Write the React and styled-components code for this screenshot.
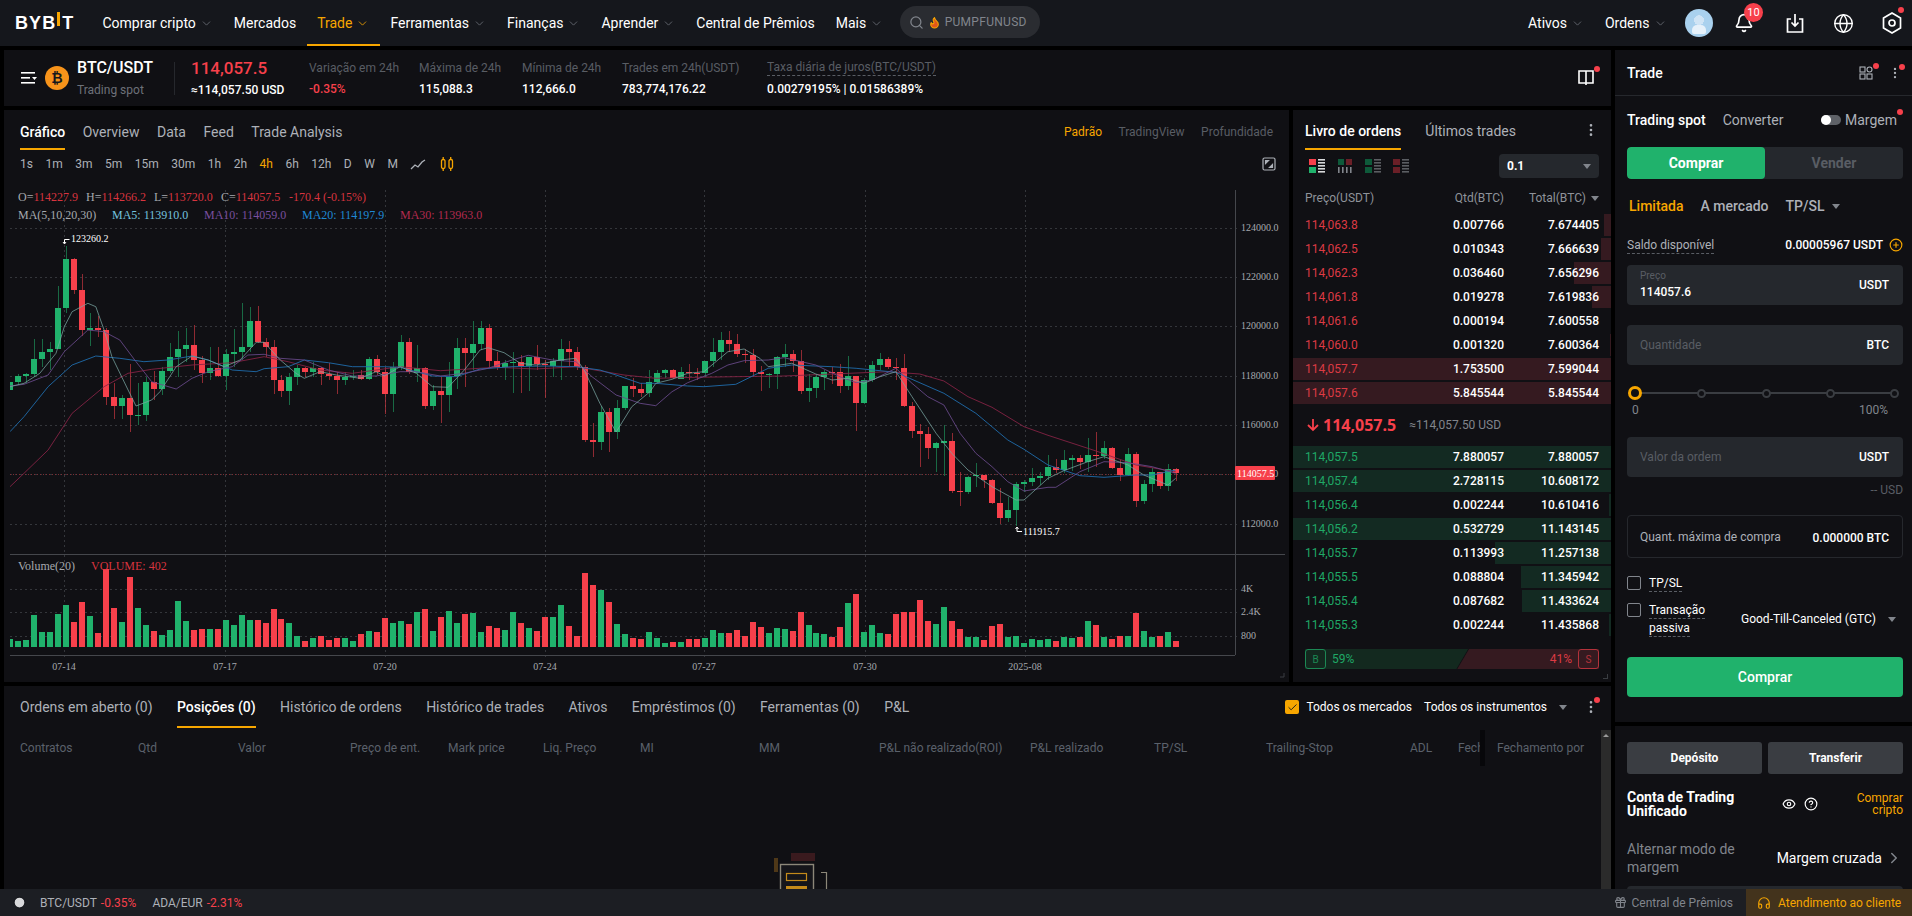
import React from 'react';
import styled, { createGlobalStyle } from 'styled-components';
import { ChevronDown, ChevronRight, Search, Bell, Globe, Eye, CircleHelp, Headphones, Gift, CirclePlus, Flame, EllipsisVertical, Check, Clock } from 'lucide-react';

const RED = '#f7404b', GREEN = '#20b26c', ORANGE = '#f7a600', PANEL = '#101014', FIELD = '#25282d';

const Global = createGlobalStyle`
  html, body { margin: 0; padding: 0; background: #000; }
  * { box-sizing: border-box; }
  #root { width: 1912px; height: 916px; overflow: hidden; font-family: Roboto, "Noto Sans", sans-serif; color: #fff; font-size: 12px; }
`;

const Page = styled.div`width: 1912px; height: 916px; display: flex; flex-direction: column; background: #000; overflow: hidden;`;

/* ---------- header ---------- */
const Header = styled.header`height: 46px; flex: none; background: #15171c; display: flex; align-items: stretch; padding: 0 6px 0 15px;`;
const Logo = styled.div`display: flex; align-items: flex-end; height: 32px; font: 700 18px "Liberation Sans", sans-serif; letter-spacing: 1.1px; line-height: 18px; color: #fff; width: 66px; margin-right: 11px;`;
const LogoBar = styled.i`display: inline-block; width: 3px; height: 14px; background: ${ORANGE}; margin: 0 2px 6px 1px;`;
const Nav = styled.nav`display: flex; align-items: stretch;`;
const NavItem = styled.a`position: relative; display: flex; align-items: center; gap: 4px; padding: 0 10.5px; font-size: 14px; color: ${p => p.$active ? ORANGE : '#fff'}; white-space: nowrap;
  ${p => p.$active ? `&::after { content: ''; position: absolute; left: 0; right: 0; bottom: 0; height: 2px; background: ${ORANGE}; }` : ''}
`;
const SearchPill = styled.div`width: 140px; height: 32px; margin: 6px 0 0 6px; border-radius: 16px; background: #2a2c31; display: flex; align-items: center; padding-left: 9px; gap: 4px; color: #81858c; font-size: 12px; letter-spacing: .3px;`;
const HeaderRight = styled.div`margin-left: auto; display: flex; align-items: center;`;
const IconBtn = styled.div`position: relative; width: 28px; display: flex; justify-content: center; color: #fff; margin-left: ${p => p.$ml}px;`;
const Avatar = styled.div`width: 28px; height: 28px; border-radius: 50%; background: radial-gradient(circle at 50% 40%, #cfe4f5 0 22%, #a9d1ee 23% 100%); position: relative; overflow: hidden; margin-left: 8px;
  &::after { content: ''; position: absolute; left: 7px; bottom: 3px; width: 14px; height: 9px; border-radius: 5px 5px 2px 2px; background: #e6f1fa; }`;
const Badge = styled.span`position: absolute; top: -10px; left: 14px; min-width: 19px; height: 19px; border-radius: 50%; background: ${RED}; font-size: 11px; display: flex; align-items: center; justify-content: center; color: #fff;`;
const Dot = styled.span`position: absolute; width: 6px; height: 6px; border-radius: 50%; background: ${RED}; top: ${p => p.$t}px; right: ${p => p.$r}px;`;

/* ---------- layout ---------- */
const Main = styled.div`flex: 1; min-height: 0; display: flex; gap: 4px; padding: 4px 0 0 4px; overflow: hidden;`;
const LeftCol = styled.div`width: 1607px; flex: none; display: flex; flex-direction: column; gap: 4px;`;
const RightCol = styled.div`width: 297px; flex: none; display: flex; flex-direction: column; gap: 4px;`;
const Panel = styled.section`background: ${PANEL}; position: relative;`;

/* ---------- ticker ---------- */
const Ticker = styled(Panel)`height: 56px; flex: none; display: flex; align-items: center; padding-left: 17px;`;
const CoinWrap = styled.div`display: flex; align-items: center; gap: 8px; margin-left: 8px; width: 129px;`;
const Coin = styled.div`width: 24px; height: 24px; border-radius: 50%; background: #f7931a; flex: none; display: flex; align-items: center; justify-content: center; font: 700 14px "Liberation Sans", sans-serif; color: #15171c;`;
const PairName = styled.div`font-size: 16px; font-weight: 500; line-height: 20px;`;
const PairSub = styled.div`font-size: 12px; color: #6d7179; line-height: 18px; margin-top: 3px;`;
const VLine = styled.div`width: 1px; height: 33px; background: #26282d; margin: 0 16px 0 0;`;
const PriceBox = styled.div`width: 118px;`;
const PriceBig = styled.div`font-size: 17px; font-weight: 500; color: ${RED}; line-height: 22px;`;
const PriceSub = styled.div`font-size: 12px; font-weight: 500; line-height: 18px; margin-top: 2px;`;
const Stat = styled.div`width: ${p => p.$w}px; flex: none;`;
const StatLabel = styled.div`font-size: 12px; color: #595d64; line-height: 16px; white-space: nowrap; ${p => p.$dash ? 'border-bottom: 1px dashed #595d64; display: inline-block;' : ''}`;
const StatValue = styled.div`font-size: 12px; font-weight: 500; color: ${p => p.$c || '#fff'}; line-height: 16px; margin-top: 5px; white-space: nowrap;`;
const TickerEnd = styled.div`position: absolute; right: 13px; top: 18px; width: 24px; height: 20px; color: #fff; display: flex; justify-content: center;`;

/* ---------- chart panel ---------- */
const MiddleRow = styled.div`height: 572px; flex: none; display: flex; gap: 4px;`;
const ChartPanel = styled(Panel)`width: 1285px; flex: none; overflow: hidden;`;
const ChartTop = styled.div`height: 40px; display: flex; align-items: stretch; padding: 0 16px 0 16px; gap: 17.5px;`;
const ChartTab = styled.div`position: relative; display: flex; align-items: center; padding-top: ${p => p.$pt || 4}px; font-size: 14px; color: ${p => p.$active ? '#fff' : '#adb1b8'}; font-weight: ${p => p.$active ? 500 : 400};
  ${p => p.$active ? `&::after { content: ''; position: absolute; left: 0; right: 0; bottom: 0; height: 2px; background: ${ORANGE}; }` : ''}`;
const ViewSwitch = styled.div`margin-left: auto; padding-top: 4px; display: flex; align-items: center; gap: 16.5px;`;
const ViewItem = styled.span`font-size: 12px; color: ${p => p.$active ? ORANGE : '#595d64'};`;
const TimeRow = styled.div`height: 28px; display: flex; align-items: center; padding: 0 13px 0 16px;`;
const TimeItem = styled.span`font-size: 12px; color: ${p => p.$active ? ORANGE : '#adb1b8'}; margin-right: 12.5px;`;
const Expand = styled.div`margin-left: auto; color: #adb1b8; display: flex;`;
const ChartSvg = styled.svg`display: block; text { font-family: "Liberation Serif", serif; }`;

/* ---------- order book ---------- */
const Book = styled(Panel)`width: 318px; flex: none; overflow: hidden;`;
const BookTabs = styled.div`height: 40px; display: flex; align-items: stretch; padding: 0 12px; gap: 24px; position: relative;`;
const BookDots = styled.div`position: absolute; right: 12px; top: 12px; color: #adb1b8; display: flex;`;
const BookTools = styled.div`height: 32px; display: flex; align-items: center; padding: 0 12px 0 16px; gap: 12px;`;
const Select = styled.div`margin-left: auto; width: 100px; height: 24px; border-radius: 4px; background: ${FIELD}; display: flex; align-items: center; justify-content: space-between; padding: 0 8px; font-size: 12px; font-weight: 700;`;
const Caret = styled.i`display: inline-block; width: 0; height: 0; border-left: ${p => p.$s || 4}px solid transparent; border-right: ${p => p.$s || 4}px solid transparent; border-top: ${p => (p.$s || 4) + 1}px solid ${p => p.$c || '#81858c'};`;
const BookHead = styled.div`height: 32px; display: grid; grid-template-columns: 128px 71px 95px; align-items: center; padding: 0 0 0 12px; color: #8f939a; font-size: 12px;`;
const Right = styled.div`text-align: right; white-space: nowrap; display: flex; justify-content: flex-end; align-items: center; gap: 5px;`;
const Rows = styled.div`display: flex; flex-direction: column; gap: 2px;`;
const Row = styled.div`position: relative; height: 22px; display: grid; grid-template-columns: 128px 71px 95px; align-items: center; padding-left: 12px; font-size: 12px; font-weight: 500;`;
const RowBar = styled.span`position: absolute; right: 0; top: 0; bottom: 0; background: ${p => p.$c};`;
const RowPrice = styled.span`position: relative; color: ${p => p.$c}; font-weight: 400;`;
const RowNum = styled.span`position: relative; text-align: right;`;
const Mid = styled.div`height: 42px; display: flex; align-items: center; padding-left: 13px; gap: 3px;`;
const MidPrice = styled.span`font: 700 16px "Noto Sans", sans-serif; color: ${RED}; margin-right: 10px;`;
const MidSub = styled.span`font-size: 12px; color: #81858c;`;
const Ratio = styled.div`position: relative; margin: 13px 12px 0; height: 20px; display: flex; justify-content: space-between; align-items: center; font-size: 12px;`;
const RatioFill = styled.div`position: absolute; inset: 0; background: ${p => p.$bg}; clip-path: ${p => p.$clip};`;
const RatioSide = styled.div`position: relative; display: flex; align-items: center; gap: 6px; color: ${p => p.$c};`;
const RatioBox = styled.span`width: 21px; height: 20px; border: 1px solid ${p => p.$c}; border-radius: 3px; display: flex; align-items: center; justify-content: center; font-size: 10px; opacity: .75;`;
const Corner = styled.i`position: absolute; right: 3px; bottom: 3px; width: 5px; height: 5px; border-right: 1px solid #3a3d42; border-bottom: 1px solid #3a3d42;`;

/* ---------- bottom panel ---------- */
const Bottom = styled(Panel)`flex: 1; min-height: 0; display: flex; flex-direction: column; overflow: hidden;`;
const BottomTabs = styled.div`height: 42px; flex: none; display: flex; align-items: stretch; padding: 0 12px 0 16px; gap: 24.4px; margin-bottom: 2px;`;
const BottomTab = styled.div`position: relative; display: flex; align-items: center; font-size: 14px; color: ${p => p.$active ? '#fff' : '#adb1b8'}; font-weight: ${p => p.$active ? 500 : 400}; white-space: nowrap;
  ${p => p.$active ? `&::after { content: ''; position: absolute; left: 0; right: 0; bottom: 0; height: 2px; background: ${ORANGE}; }` : ''}`;
const BottomTools = styled.div`margin-left: auto; display: flex; align-items: center; font-size: 12px; position: relative;`;
const OrangeCheck = styled.div`width: 14px; height: 14px; background: ${ORANGE}; border-radius: 2px; display: flex; align-items: center; justify-content: center; color: #15171c; margin-right: 7px;`;
const ToolLabel = styled.span`margin: 0 12px;`;
const ToolDots = styled.span`display: flex; margin-left: 16px; color: #adb1b8;`;
const BottomBody = styled.div`flex: 1; min-height: 0; display: flex;`;
const TableWrap = styled.div`flex: 1; min-width: 0; overflow: hidden;`;
const TableHead = styled.div`height: 36px; display: grid; grid-template-columns: 118px 100px 112px 98px 95px 97px 119px 120px 151px 124px 112px 144px 48px 22px 1fr; align-items: center; padding-left: 16px; font-size: 12px; color: #5b616b; white-space: nowrap;`;
const ClipCell = styled.span`overflow: hidden;`;
const LastCell = styled.span`position: relative; padding-left: 17px;
  &::before { content: ''; position: absolute; left: 0; top: -11px; bottom: -11px; width: 5px; background: #07070a; }`;
const EmptyArt = styled.svg`display: block; margin: 87px 0 0 770px;`;
const Scroll = styled.div`width: 10px; flex: none; background: #2b2b2b; position: relative;
  &::after { content: ''; position: absolute; left: 2px; top: 4px; border-left: 3px solid transparent; border-right: 3px solid transparent; border-bottom: 3px solid #9a9a9a; }`;

/* ---------- trade panel ---------- */
const TradePanel = styled(Panel)`height: 672px; flex: none; padding: 0 9px 0 12px;`;
const TradeHead = styled.div`height: 46px; margin: 0 -9px 0 -12px; padding: 0 9px 0 12px; border-bottom: 1px solid #26282d; display: flex; align-items: center; justify-content: space-between; font-size: 14px; font-weight: 500;`;
const HeadIcons = styled.div`display: flex; align-items: center; gap: 15px; position: relative; color: #adb1b8; padding-right: 1px;`;
const ModeRow = styled.div`height: 24px; margin-top: 12px; display: flex; align-items: center; font-size: 14px; font-weight: 500; position: relative;`;
const ModeOff = styled.span`color: #adb1b8; font-weight: 400; margin-left: ${p => p.$ml}px; margin-right: ${p => p.$mr || 0}px;`;
const Toggle = styled.span`margin-left: auto; width: 20px; height: 10px; border-radius: 5px; background: #5e6167; position: relative; margin-right: 4px;
  &::after { content: ''; position: absolute; left: 0; top: 0; width: 10px; height: 10px; border-radius: 50%; background: #fff; }`;
const SideSwitch = styled.div`margin-top: 15px; height: 32px; display: flex; background: ${FIELD}; border-radius: 4px; overflow: hidden; font-size: 14px; font-weight: 700;`;
const SideBtn = styled.div`width: 138px; display: flex; align-items: center; justify-content: center; color: ${p => p.$on ? '#fff' : '#595d64'}; background: ${p => p.$on ? GREEN : 'transparent'}; border-radius: 4px;`;
const OrderTypes = styled.div`margin-top: 16px; height: 22px; padding-left: 2px; display: flex; align-items: center; gap: 17px; font-size: 14px; font-weight: 500;`;
const OrderType = styled.span`color: ${p => p.$on ? ORANGE : '#adb1b8'}; display: flex; align-items: center; gap: 8px;`;
const SaldoRow = styled.div`margin-top: 19px; height: 18px; display: flex; align-items: center; justify-content: space-between; font-size: 12px;`;
const DashLabel = styled.span`color: ${p => p.$c || '#adb1b8'}; border-bottom: 1px dashed #595d64; line-height: 16px;`;
const SaldoValue = styled.span`display: flex; align-items: center; gap: 6px; font-weight: 500; color: #fff;`;
const Field = styled.div`position: relative; height: 40px; margin-top: ${p => p.$mt}px; background: ${FIELD}; border-radius: 4px; display: flex; align-items: center; justify-content: space-between; padding: 0 14px 0 13px; font-size: 12px; color: #595d64;`;
const FieldStack = styled.div`display: flex; flex-direction: column;`;
const FieldMini = styled.span`font-size: 10px; color: #595d64; line-height: 13px;`;
const FieldValue = styled.span`font-size: 12px; color: #fff; font-weight: 500; line-height: 17px; margin-top: 2px;`;
const FieldUnit = styled.span`color: #fff; font-weight: 500;`;
const SliderWrap = styled.div`margin-top: 20px; height: 16px; display: flex; align-items: center; justify-content: space-between; position: relative; padding: 0 4px 0 1px;
  &::before { content: ''; position: absolute; left: 8px; right: 6px; top: 7px; height: 2px; background: #3a3d42; }`;
const Thumb = styled.span`position: relative; width: 14px; height: 14px; border-radius: 50%; border: 3px solid ${ORANGE}; background: ${PANEL};`;
const Node = styled.span`position: relative; width: 9px; height: 9px; border-radius: 50%; border: 2px solid #3a3d42; background: ${PANEL};`;
const SliderLabels = styled.div`margin-top: 1px; display: flex; justify-content: space-between; padding: 0 15px 0 5px; color: #81858c; font-size: 12px; line-height: 16px;`;
const USD = styled.div`text-align: right; color: #595d64; font-size: 12px; line-height: 16px; margin-top: 5px;`;
const MaxBox = styled.div`height: 43px; margin-top: 17px; border: 1px solid #26282d; border-radius: 4px; display: flex; align-items: center; justify-content: space-between; padding: 0 13px 0 12px; font-size: 12px; color: #adb1b8;`;
const MaxVal = styled.span`color: #fff; font-weight: 500; margin-top: 3px;`;
const CheckRow = styled.div`display: flex; gap: 8px; margin-top: ${p => p.$mt}px; align-items: flex-start;`;
const CheckBox = styled.span`width: 14px; height: 14px; border: 1px solid #81858c; border-radius: 2px; flex: none;`;
const CheckLabels = styled.div`display: flex; flex-direction: column; gap: 1px; width: 84px; line-height: 16px; font-size: 12px; margin-top: -1px; align-items: flex-start;`;
const Gtc = styled.div`display: flex; align-items: center; gap: 12px; font-size: 12px; margin-top: 9px; white-space: nowrap;`;
const BigBuy = styled.div`height: 40px; margin-top: 20px; background: ${GREEN}; border-radius: 4px; display: flex; align-items: center; justify-content: center; font-size: 14px; font-weight: 500;`;

const Account = styled(Panel)`flex: 1; min-height: 0; padding: 16px 9px 0 12px; overflow: hidden;`;
const BtnRow = styled.div`display: flex; gap: 6px;`;
const GrayBtn = styled.div`flex: 1; height: 32px; background: #3a3d42; border-radius: 3px; display: flex; align-items: center; justify-content: center; font-size: 12px; font-weight: 700;`;
const AccRow = styled.div`display: flex; align-items: center; margin-top: 15px; height: 30px;`;
const AccTitle = styled.div`width: 155px; font-size: 14px; font-weight: 700; line-height: 14px;`;
const AccIcons = styled.div`display: flex; gap: 8px; align-items: center; color: #fff;`;
const AccLink = styled.div`margin-left: auto; width: 60px; text-align: right; color: ${ORANGE}; font-size: 12px; line-height: 12px;`;
const MarginRow = styled.div`display: flex; align-items: center; justify-content: space-between; margin-top: 21px; height: 36px;`;
const MarginLabel = styled.div`width: 130px; color: #81858c; font-size: 14px; line-height: 18px;`;
const MarginVal = styled.div`display: flex; align-items: center; gap: 3px; font-size: 14px;`;
const MarginField = styled.div`height: 30px; margin-top: 10px; background: ${FIELD}; border-radius: 4px;`;

/* ---------- footer ---------- */
const Footer = styled.footer`height: 27px; flex: none; background: #1c1e23; display: flex; align-items: center; padding-left: 13px; font-size: 12px; color: #adb1b8; position: relative; z-index: 2;`;
const FootTick = styled.span`margin-left: ${p => p.$ml}px; white-space: nowrap;`;
const FootRed = styled.span`color: ${RED}; margin-left: 4px;`;
const FootRight = styled.div`margin-left: auto; display: flex; align-items: stretch; align-self: stretch;`;
const FootAward = styled.div`display: flex; align-items: center; gap: 5px; color: #81858c; padding-right: 13px;`;
const Support = styled.div`width: 166px; display: flex; align-items: center; gap: 7px; padding-left: 11px; background: #43331c; color: ${ORANGE};`;

/* ---------- chart data: [colour, high, top, bottom, low, volume] in sampled units ---------- */
const C = [
['g',636,636,660,660,267],['g',612,618,636,645,273],['g',608,612,618,640,270],['g',507,567,612,620,195],['g',507,546,567,592,246],['g',516,537,546,600,246],['g',348,414,537,537,192],['g',228,267,414,428,165],['r',265,267,360,372,216],['r',312,360,480,498,156],['g',430,475,481,528,198],['r',438,475,479,502,249],['r',475,480,681,705,58],['r',638,681,708,746,174],['g',675,684,708,746,216],['r',582,684,735,785,81],['g',640,735,737,765,174],['g',622,636,735,752,225],['r',602,636,657,690,243],['g',592,603,657,675,255],['g',518,561,603,608,240],['g',484,537,561,620,153],['g',473,525,537,575,213],['r',465,525,570,600,240],['r',558,570,609,638,237],['g',530,594,609,630,237],['r',530,594,618,620,237],['g',536,552,618,660,210],['g',476,546,552,590,225],['g',400,531,546,570,195],['g',410,453,531,545,210],['r',408,453,516,520,210],['r',505,516,531,560,219],['r',510,531,630,672,177],['r',615,630,663,680,207],['g',610,621,663,705,219],['g',585,594,621,645,258],['r',590,594,606,620,273],['g',575,594,606,620,264],['r',590,594,612,645,258],['r',580,612,618,630,270],['r',605,618,630,672,264],['g',605,621,630,645,264],['g',600,618,620,630,273],['r',600,615,627,630,252],['g',560,567,627,630,243],['r',556,567,606,615,246],['r',590,606,672,732,204],['g',575,591,672,726,219],['g',495,516,591,600,213],['r',505,516,606,612,222],['g',525,594,610,636,186],['r',590,594,708,716,177],['g',645,663,708,720,243],['r',620,663,675,758,201],['g',576,620,675,726,183],['g',505,534,618,656,219],['r',505,534,549,650,192],['g',453,522,549,600,189],['g',453,474,522,540,246],['r',463,474,573,590,228],['r',545,573,591,600,234],['g',570,579,591,630,240],['g',545,576,579,668,186],['r',555,576,588,668,219],['g',560,561,588,662,234],['r',525,561,582,600,243],['r',570,582,585,684,201],['g',565,573,588,620,201],['g',507,537,573,630,165],['r',514,537,546,590,228],['r',530,546,591,600,258],['r',585,591,810,815,69],['r',760,810,816,860,105],['g',708,726,816,840,120],['r',715,726,786,845,156],['g',690,714,786,806,222],['g',648,648,714,720,252],['r',625,648,657,680,264],['r',640,657,669,680,267],['g',600,636,669,680,246],
['g',600,609,636,640,264],['g',597,600,609,625,279],['r',597,600,624,627,276],['g',590,606,627,628,276],['r',582,606,609,630,267],['r',595,609,611,630,267],['g',573,573,609,620,264],['g',504,546,573,590,240],['g',487,510,546,570,249],['r',483,510,522,546,249],['r',491,522,552,560,240],['r',537,552,555,580,258],['r',537,555,606,622,216],['r',588,606,612,663,231],['g',610,612,614,654,249],['g',558,561,612,657,234],['g',522,552,561,590,237],['r',540,552,573,606,243],['r',540,573,663,672,186],['g',612,654,663,696,225],['g',612,621,654,684,249],['g',600,606,621,660,252],['r',590,606,609,642,261],['r',582,606,648,668,231],['g',558,618,648,660,159],['r',618,618,699,783,132],['g',625,630,699,702,246],['g',573,585,630,636,225],['g',549,567,585,600,249],['r',561,567,591,597,252],['r',565,591,595,630,192],['r',552,594,708,712,186],['r',695,708,783,804,186],['r',762,783,792,890,150],['r',771,792,834,866,213],['g',815,819,834,906,222],['g',765,813,819,918,171],['r',790,813,963,970,213],['r',906,963,966,1008,237],['g',918,921,966,972,261],['g',880,915,918,950,261],['r',915,915,930,955,270],['r',927,930,999,1002,228],['r',955,999,1044,1062,222],['g',980,1020,1044,1056,261],['g',935,942,1020,1068,258],['g',930,936,942,965,279],['g',895,924,936,948,267],['g',905,918,924,945,270],['g',855,891,918,930,267],['r',868,891,900,910,273],['g',840,870,900,908,261],['g',855,864,870,902,264],['r',855,864,876,898,261],['g',804,855,876,905,213],['r',786,855,858,890,225],['g',813,834,858,868,261],['r',830,834,894,896,267],['r',870,894,915,932,258],['g',834,852,915,918,258],['r',846,852,993,1010,189],['g',930,942,993,1002,243],['g',895,906,942,966,261],['r',905,906,948,957,258],['g',882,897,948,963,246],['r',893,897,909,933,273],
];
const Y = v => 170 + v / 3;
const VY = v => 550 + v / 3;
const X = i => Math.round(10 + i * 7.985);
const line = (a, b) => [...a.map(([x, y]) => `${(x / 2.412).toFixed(1)},${Y(y).toFixed(1)}`), ...b.map(([x, y]) => `${(650 + x / 2.412).toFixed(1)},${Y(y).toFixed(1)}`)].join(' ');
const toPts = s => s.trim().split(/\s+/).map(p => p.split(',').map(Number));
const MA5 = line(toPts('24,650 58,640 96,610 135,550 155,470 174,425 212,400 231,410 251,480 270,560 309,660 328,708 366,690 386,665 425,590 463,558 502,570 541,590 579,570 618,517 637,517 676,570 714,610 734,625 772,605 811,615 869,625 907,605 927,618 965,590 1004,610 1043,650 1081,652 1120,600 1158,540 1177,533 1216,548 1255,580 1293,585 1351,570 1389,565 1409,600 1447,700 1486,786 1524,710'), toPts('0,665 14,640 53,628 91,610 130,605 188,545 227,537 265,565 285,590 342,580 400,612 439,630 478,625 516,640 555,620 593,605 632,680 690,790 728,850 767,900 825,950 883,990 902,990 960,925 998,902 1056,875 1095,860 1153,885 1191,915 1249,945 1268,925'));
const MA10 = line(toPts('24,648 58,643 116,615 155,545 212,480 251,485 289,510 328,575 366,635 425,657 463,625 502,605 560,590 598,555 637,553 676,565 734,570 792,600 850,618 907,618 965,605 1004,605 1062,618 1120,610 1177,595 1235,570 1274,556 1332,570 1389,575 1428,620 1486,675 1544,700'), toPts('14,707 53,665 91,638 149,610 188,585 227,572 285,570 323,563 400,585 458,620 497,638 536,630 593,595 632,640 670,680 709,705 748,790 786,850 825,890 863,935 902,963 960,952 979,952 1037,905 1095,875 1153,878 1211,890 1268,910'));
const MA20 = line(toPts('24,785 58,740 116,650 174,585 231,558 289,565 347,575 405,570 463,558 502,570 560,600 618,605 637,596 695,590 734,570 792,578 850,590 927,590 965,592 1043,618 1100,620 1158,597 1235,590 1313,588 1389,590 1447,600 1486,615 1544,640'), toPts('14,640 91,648 130,650 207,643 285,595 342,585 439,590 497,595 593,607 709,670 786,730 863,810 902,838 960,885 1037,917 1095,922 1172,915 1211,915 1268,900'));
const MA30 = line(toPts('24,950 58,910 116,840 174,730 251,650 309,610 366,598 463,585 560,578 637,560 695,575 772,600 850,610 965,590 1062,602 1197,592 1293,597 1389,590 1505,615'), toPts('14,625 111,622 207,620 323,618 439,612 574,605 651,612 709,633 767,680 825,712 902,770 960,796 1076,843 1172,885 1268,905'));

const VGRID = [64, 225, 385, 545, 704, 865, 1025];
const HGRID = [[228, '124000.0'], [277, '122000.0'], [326, '120000.0'], [376, '118000.0'], [425, '116000.0'], [474, '114000.0'], [524, '112000.0']];
const VOLGRID = [[589, '4K'], [612, '2.4K'], [636, '800']];
const DATES = [[64, '07-14'], [225, '07-17'], [385, '07-20'], [545, '07-24'], [704, '07-27'], [865, '07-30'], [1025, '2025-08']];
const GRID = '#34363b', LEG = '#a6a9ae', LRED = '#d8343f';

const Chart = () => (
  <ChartSvg width="1285" height="504" viewBox="4 178 1285 504">
    <defs><clipPath id="plot"><rect x="10" y="178" width="1225" height="480" /></clipPath></defs>
    {VGRID.map(x => <line key={x} x1={x} x2={x} y1="190" y2="660" stroke={GRID} strokeWidth="1" strokeDasharray="2 3" shapeRendering="crispEdges" />)}
    {[...HGRID, ...VOLGRID].map(([y]) => <line key={y} x1="10" x2="1240" y1={y} y2={y} stroke={GRID} strokeWidth="1" strokeDasharray="2 3" shapeRendering="crispEdges" />)}
    <line x1="10" x2="1285" y1="554" y2="554" stroke="#45474c" shapeRendering="crispEdges" />
    <line x1="10" x2="1235" y1="655" y2="655" stroke="#45474c" shapeRendering="crispEdges" />
    <line x1="1235" x2="1235" y1="190" y2="655" stroke="#45474c" shapeRendering="crispEdges" />
    <line x1="10" x2="1240" y1="474" y2="474" stroke="#7c2c33" strokeDasharray="1 2" shapeRendering="crispEdges" />
    <g clipPath="url(#plot)">
      {C.map(([c, hi, top, bot, lo, vol], i) => {
        const col = c === 'g' ? GREEN : RED;
        const x = X(i);
        return (
          <g key={i}>
            <rect x={x} y={Y(hi)} width="1" height={Y(lo) - Y(hi)} fill={col} opacity=".55" shapeRendering="crispEdges" />
            <rect x={x - 3} y={Y(top)} width="6" height={Math.max(1, Y(bot) - Y(top))} fill={col} shapeRendering="crispEdges" />
            <rect x={x - 3} y={VY(vol)} width="6" height={647 - VY(vol)} fill={col} shapeRendering="crispEdges" />
          </g>
        );
      })}
      <polyline points={MA30} fill="none" stroke="#8a2346" strokeOpacity=".85" />
      <polyline points={MA20} fill="none" stroke="#1f6cab" strokeOpacity=".9" />
      <polyline points={MA10} fill="none" stroke="#6a4a8c" strokeOpacity=".85" />
      <polyline points={MA5} fill="none" stroke="#7aa5a2" strokeOpacity=".75" />
    </g>
    <g fontSize="12">
      <text x="18" y="201" fill={LEG}>O=<tspan fill={LRED}>114227.9</tspan></text>
      <text x="86" y="201" fill={LEG}>H=<tspan fill={LRED}>114266.2</tspan></text>
      <text x="154" y="201" fill={LEG}>L=<tspan fill={LRED}>113720.0</tspan></text>
      <text x="221" y="201" fill={LEG}>C=<tspan fill={LRED}>114057.5</tspan></text>
      <text x="289" y="201" fill={LRED}>-170.4 (-0.15%)</text>
      <text x="18" y="219" fill={LEG}>MA(5,10,20,30)</text>
      <text x="112" y="219" fill="#74c2df">MA5: 113910.0</text>
      <text x="204" y="219" fill="#7a4f9f">MA10: 114059.0</text>
      <text x="302" y="219" fill="#1f88d4">MA20: 114197.9</text>
      <text x="400" y="219" fill="#b42a4f">MA30: 113963.0</text>
      <text x="18" y="570" fill={LEG}>Volume(20)</text>
      <text x="91" y="570" fill={LRED}>VOLUME: 402</text>
    </g>
    <g fontSize="10" fill="#a6a9ae">
      {HGRID.map(([y, t]) => <text key={t} x="1241" y={y + 3}>{t}</text>)}
      {VOLGRID.map(([y, t]) => <text key={t} x="1241" y={y + 3}>{t}</text>)}
      {DATES.map(([x, t]) => <text key={t} x={x} y="670" textAnchor="middle">{t}</text>)}
    </g>
    <g fontSize="10" fill="#fff">
      <text x="71" y="242">123260.2</text>
      <text x="1023" y="535">111915.7</text>
    </g>
    <path d="M69.5 239.5h-5v4m-1.5-1.5l1.5 2 1.5-2" fill="none" stroke="#fff" />
    <path d="M1022 531.5h-5v-4m-1.5 1.5l1.5-2 1.5 2" fill="none" stroke="#fff" />
    <rect x="1235" y="466" width="40" height="14" rx="1" fill={RED} />
    <text x="1237" y="477" fontSize="10" fill="#fff">114057.5</text>
    <path d="M1284 673v4h-4" stroke="#3a3d42" fill="none" />
  </ChartSvg>
);

const ASKS = [
  ['114,063.8', '0.007766', '7.674405', 7], ['114,062.5', '0.010343', '7.666639', 10], ['114,062.3', '0.036460', '7.656296', 37], ['114,061.8', '0.019278', '7.619836', 19],
  ['114,061.6', '0.000194', '7.600558', 0], ['114,060.0', '0.001320', '7.600364', 1], ['114,057.7', '1.753500', '7.599044', 318], ['114,057.6', '5.845544', '5.845544', 318],
];
const BIDS = [
  ['114,057.5', '7.880057', '7.880057', 318], ['114,057.4', '2.728115', '10.608172', 318], ['114,056.4', '0.002244', '10.610416', 2], ['114,056.2', '0.532729', '11.143145', 318],
  ['114,055.7', '0.113993', '11.257138', 116], ['114,055.5', '0.088804', '11.345942', 90], ['114,055.4', '0.087682', '11.433624', 89], ['114,055.3', '0.002244', '11.435868', 2],
];

const BookRows = ({ data, price, bar }) => (
  <Rows>
    {data.map(r => (
      <Row key={r[0]}>
        <RowBar $c={bar} style={{ width: r[3] }} />
        <RowPrice $c={price}>{r[0]}</RowPrice>
        <RowNum>{r[1]}</RowNum>
        <RowNum>{r[2]}</RowNum>
      </Row>
    ))}
  </Rows>
);

const BookIcon = ({ top, bottom, lines }) => (
  <svg width="16" height="16" viewBox="0 0 16 16">
    <rect x="0" y="1" width="7" height="6" fill={top} /><rect x="0" y="9" width="7" height="6" fill={bottom} />
    {[1, 4, 7, 10, 13].map(y => <rect key={y} x="9" y={y} width="7" height="1.6" fill={lines} />)}
  </svg>
);
const BookIconV = () => (
  <svg width="16" height="16" viewBox="0 0 16 16">
    <rect x="1" y="1" width="6" height="6" fill="#0e5a3a" /><rect x="9" y="1" width="6" height="6" fill="#6b1f27" />
    {[1, 5, 9, 13].map(x => <rect key={x} x={x} y="9" width="1.6" height="6" fill="#81858c" />)}
  </svg>
);

const HEADS = ['Contratos', 'Qtd', 'Valor', 'Preço de ent.', 'Mark price', 'Liq. Preço', 'MI', 'MM', 'P&L não realizado(ROI)', 'P&L realizado', 'TP/SL', 'Trailing-Stop', 'ADL'];

const nav = [['Comprar cripto', 1], ['Mercados', 0], ['Trade', 1, true], ['Ferramentas', 1], ['Finanças', 1], ['Aprender', 1], ['Central de Prêmios', 0], ['Mais', 1]];

export default function App() {
  return (
    <Page>
      <Global />
      <Header>
        <Logo>BYB<LogoBar />T</Logo>
        <Nav>
          {nav.map(([t, ch, act]) => (
            <NavItem key={t} $active={act}>{t}{ch ? <ChevronDown size={13} strokeWidth={1.5} color={act ? ORANGE : '#6d7179'} /> : null}</NavItem>
          ))}
        </Nav>
        <SearchPill><Search size={15} color="#81858c" /><Flame size={13} color="#f7a600" fill="#e0561b" />PUMPFUNUSD</SearchPill>
        <HeaderRight>
          <NavItem>Ativos<ChevronDown size={13} strokeWidth={1.5} color="#6d7179" /></NavItem>
          <NavItem>Ordens<ChevronDown size={13} strokeWidth={1.5} color="#6d7179" /></NavItem>
          <Avatar />
          <IconBtn $ml={17}><Bell size={20} /><Badge>10</Badge></IconBtn>
          <IconBtn $ml={23}>
            <svg width="20" height="22" viewBox="0 0 20 22" fill="none" stroke="#fff" strokeWidth="1.7"><path d="M6 7H2.5v13h15V7H14" /><path d="M10 2v12m-3.5-3.5L10 14l3.5-3.5" /></svg>
          </IconBtn>
          <IconBtn $ml={20}><Globe size={21} strokeWidth={1.6} /></IconBtn>
          <IconBtn $ml={21}>
            <svg width="22" height="24" viewBox="0 0 22 24" fill="none" stroke="#fff" strokeWidth="1.7"><path d="M11 2l8.5 5v10L11 22l-8.5-5V7z" /><circle cx="11" cy="12" r="3" /></svg>
            <Dot $t={-4} $r={2} />
          </IconBtn>
        </HeaderRight>
      </Header>

      <Main>
        <LeftCol>
          <Ticker>
            <svg width="16" height="14" viewBox="0 0 16 14" fill="#fff"><rect x="0" y="1" width="14" height="1.6" /><rect x="0" y="6" width="9" height="1.6" /><rect x="0" y="11" width="14" height="1.6" /><path d="M11 6h5l-2.5 3z" /></svg>
            <CoinWrap>
              <Coin>₿</Coin>
              <div><PairName>BTC/USDT</PairName><PairSub>Trading spot</PairSub></div>
            </CoinWrap>
            <VLine />
            <PriceBox><PriceBig>114,057.5</PriceBig><PriceSub>≈114,057.50 USD</PriceSub></PriceBox>
            <Stat $w={110}><StatLabel>Variação em 24h</StatLabel><StatValue $c={RED}>-0.35%</StatValue></Stat>
            <Stat $w={103}><StatLabel>Máxima de 24h</StatLabel><StatValue>115,088.3</StatValue></Stat>
            <Stat $w={100}><StatLabel>Mínima de 24h</StatLabel><StatValue>112,666.0</StatValue></Stat>
            <Stat $w={145}><StatLabel>Trades em 24h(USDT)</StatLabel><StatValue>783,774,176.22</StatValue></Stat>
            <Stat $w={170}><StatLabel $dash>Taxa diária de juros(BTC/USDT)</StatLabel><StatValue>0.00279195% | 0.01586389%</StatValue></Stat>
            <TickerEnd>
              <svg width="18" height="20" viewBox="0 0 18 20" fill="none" stroke="#fff" strokeWidth="1.6"><path d="M2 3h14v12H2zM9 3v14" /></svg>
              <Dot $t={-2} $r={-2} />
            </TickerEnd>
          </Ticker>

          <MiddleRow>
            <ChartPanel>
              <ChartTop>
                <ChartTab $active>Gráfico</ChartTab><ChartTab>Overview</ChartTab><ChartTab>Data</ChartTab><ChartTab>Feed</ChartTab><ChartTab>Trade Analysis</ChartTab>
                <ViewSwitch><ViewItem $active>Padrão</ViewItem><ViewItem>TradingView</ViewItem><ViewItem>Profundidade</ViewItem></ViewSwitch>
              </ChartTop>
              <TimeRow>
                {['1s', '1m', '3m', '5m', '15m', '30m', '1h', '2h', '4h', '6h', '12h', 'D', 'W', 'M'].map(t => <TimeItem key={t} $active={t === '4h'}>{t}</TimeItem>)}
                <svg width="16" height="14" viewBox="0 0 16 14" fill="none" stroke="#adb1b8" strokeWidth="1.3" style={{ marginRight: 14 }}><path d="M1 12l4-4 3 2 4-5 3-2" /></svg>
                <svg width="14" height="16" viewBox="0 0 14 16" fill="none" stroke={ORANGE} strokeWidth="1.3"><rect x="1.5" y="3.5" width="3.5" height="9" rx="1.5" /><rect x="9" y="3.5" width="3.5" height="9" rx="1.5" /><path d="M3.2 1v2.5M3.2 12.5V15M10.7 1v2.5M10.7 12.5V15" /></svg>
                <Expand><svg width="14" height="14" viewBox="0 0 14 14" fill="none" stroke="#adb1b8" strokeWidth="1.2"><rect x="1" y="1" width="12" height="12" rx="1.5" /><path d="M3.5 3.5h3l-3 3zM10.5 10.5h-3l3-3z" fill="#adb1b8" /></svg></Expand>
              </TimeRow>
              <Chart />
            </ChartPanel>

            <Book>
              <BookTabs>
                <ChartTab $active $pt={2}>Livro de ordens</ChartTab><ChartTab $pt={2}>Últimos trades</ChartTab>
                <BookDots><EllipsisVertical size={16} /></BookDots>
              </BookTabs>
              <BookTools>
                <BookIcon top={RED} bottom={GREEN} lines="#d8d9db" />
                <BookIconV />
                <BookIcon top="#0e5a3a" bottom="#0e5a3a" lines="#5b5e63" />
                <BookIcon top="#6b1f27" bottom="#6b1f27" lines="#5b5e63" />
                <Select>0.1<Caret /></Select>
              </BookTools>
              <BookHead><span>Preço(USDT)</span><Right>Qtd(BTC)</Right><Right>Total(BTC)<Caret /></Right></BookHead>
              <BookRows data={ASKS} price="#dd3a44" bar="#351a20" />
              <Mid>
                <svg width="14" height="14" viewBox="0 0 14 14" fill="none" stroke={RED} strokeWidth="1.8"><path d="M7 1v11M2 7l5 5 5-5" /></svg>
                <MidPrice>114,057.5</MidPrice><MidSub>≈114,057.50 USD</MidSub>
              </Mid>
              <BookRows data={BIDS} price="#1fa866" bar="#132a22" />
              <Ratio>
                <RatioFill $bg="#13291f" $clip="polygon(0 0, 55.5% 0, 51.5% 100%, 0 100%)" />
                <RatioFill $bg="#351a20" $clip="polygon(55.8% 0, 100% 0, 100% 100%, 51.8% 100%)" />
                <RatioSide $c="#1fa866"><RatioBox $c="#1fa866">B</RatioBox>59%</RatioSide>
                <RatioSide $c="#dd3a44">41%<RatioBox $c="#dd3a44">S</RatioBox></RatioSide>
              </Ratio>
              <Corner />
            </Book>
          </MiddleRow>

          <Bottom>
            <BottomTabs>
              <BottomTab>Ordens em aberto (0)</BottomTab><BottomTab $active>Posições (0)</BottomTab><BottomTab>Histórico de ordens</BottomTab><BottomTab>Histórico de trades</BottomTab><BottomTab>Ativos</BottomTab><BottomTab>Empréstimos (0)</BottomTab><BottomTab>Ferramentas (0)</BottomTab><BottomTab>P&amp;L</BottomTab>
              <BottomTools>
                <OrangeCheck><Check size={11} strokeWidth={2} /></OrangeCheck>
                Todos os mercados
                <ToolLabel>Todos os instrumentos</ToolLabel>
                <Caret $s={4.5} $c="#81858c" />
                <ToolDots><EllipsisVertical size={16} /></ToolDots>
                <Dot $t={11} $r={-1} />
              </BottomTools>
            </BottomTabs>
            <BottomBody>
              <TableWrap>
                <TableHead>
                  {HEADS.map(h => <span key={h}>{h}</span>)}
                  <ClipCell>Fech</ClipCell>
                  <LastCell>Fechamento por</LastCell>
                </TableHead>
                <EmptyArt width="54" height="36" viewBox="0 0 54 36">
                  <rect x="0" y="5" width="4" height="14" fill="#6b4a1a" opacity=".7" />
                  <rect x="17" y="0" width="24" height="8" fill="#3a1a1e" />
                  <rect x="6.5" y="11.5" width="33" height="28" fill="#15151a" stroke="#8c8779" strokeWidth="1.4" />
                  <rect x="12.5" y="20.5" width="20" height="7" fill="none" stroke="#c48a1a" strokeWidth="1.2" />
                  <rect x="12" y="33" width="21" height="3" fill="#c48a1a" />
                  <path d="M47 19.5h5.5V36" fill="none" stroke="#8c8779" strokeWidth="1.2" />
                </EmptyArt>
              </TableWrap>
              <Scroll />
            </BottomBody>
          </Bottom>
        </LeftCol>

        <RightCol>
          <TradePanel>
            <TradeHead>
              Trade
              <HeadIcons>
                <svg width="14" height="14" viewBox="0 0 14 14" fill="none" stroke="#adb1b8" strokeWidth="1.1"><rect x="1" y="1" width="5" height="5" /><rect x="8" y="8" width="5" height="5" /><rect x="1" y="8" width="5" height="5" /><circle cx="10.5" cy="3.5" r="2.5" /></svg>
                <EllipsisVertical size={14} />
                <Dot $t={-3} $r={24} />
                <Dot $t={-2} $r={-2} />
              </HeadIcons>
            </TradeHead>
            <ModeRow>Trading spot<ModeOff $ml={17}>Converter</ModeOff><Toggle /><ModeOff $ml={0} $mr={6}>Margem</ModeOff><Dot $t={1} $r={0} /></ModeRow>
            <SideSwitch><SideBtn $on>Comprar</SideBtn><SideBtn>Vender</SideBtn></SideSwitch>
            <OrderTypes><OrderType $on>Limitada</OrderType><OrderType>A mercado</OrderType><OrderType>TP/SL<Caret $s={4.5} /></OrderType></OrderTypes>
            <SaldoRow><DashLabel>Saldo disponível</DashLabel><SaldoValue>0.00005967 USDT<CirclePlus size={14} color={ORANGE} /></SaldoValue></SaldoRow>
            <Field $mt={11}><FieldStack><FieldMini>Preço</FieldMini><FieldValue>114057.6</FieldValue></FieldStack><FieldUnit>USDT</FieldUnit></Field>
            <Field $mt={20}>Quantidade<FieldUnit>BTC</FieldUnit></Field>
            <SliderWrap><Thumb /><Node /><Node /><Node /><Node /></SliderWrap>
            <SliderLabels><span>0</span><span>100%</span></SliderLabels>
            <Field $mt={19}>Valor da ordem<FieldUnit>USDT</FieldUnit></Field>
            <USD>-- USD</USD>
            <MaxBox><span>Quant. máxima de compra</span><MaxVal>0.000000 BTC</MaxVal></MaxBox>
            <CheckRow $mt={18}><CheckBox /><CheckLabels><DashLabel $c="#fff">TP/SL</DashLabel></CheckLabels></CheckRow>
            <CheckRow $mt={11}>
              <CheckBox />
              <CheckLabels><DashLabel $c="#fff">Transação</DashLabel><DashLabel $c="#fff">passiva</DashLabel></CheckLabels>
              <Gtc>Good-Till-Canceled (GTC)<Caret $s={4.5} /></Gtc>
            </CheckRow>
            <BigBuy>Comprar</BigBuy>
          </TradePanel>
          <Account>
            <BtnRow><GrayBtn>Depósito</GrayBtn><GrayBtn>Transferir</GrayBtn></BtnRow>
            <AccRow>
              <AccTitle>Conta de Trading Unificado</AccTitle>
              <AccIcons><Eye size={14} /><CircleHelp size={14} /></AccIcons>
              <AccLink>Comprar cripto</AccLink>
            </AccRow>
            <MarginRow>
              <MarginLabel>Alternar modo de margem</MarginLabel>
              <MarginVal>Margem cruzada<ChevronRight size={18} color="#81858c" /></MarginVal>
            </MarginRow>
            <MarginField />
          </Account>
        </RightCol>
      </Main>

      <Footer>
        <Clock size={13} color="#15171c" fill="#d8d9db" />
        <FootTick $ml={14}>BTC/USDT<FootRed>-0.35%</FootRed></FootTick>
        <FootTick $ml={16}>ADA/EUR<FootRed>-2.31%</FootRed></FootTick>
        <FootRight>
          <FootAward><Gift size={13} />Central de Prêmios</FootAward>
          <Support><Headphones size={14} />Atendimento ao cliente</Support>
        </FootRight>
      </Footer>
    </Page>
  );
}
